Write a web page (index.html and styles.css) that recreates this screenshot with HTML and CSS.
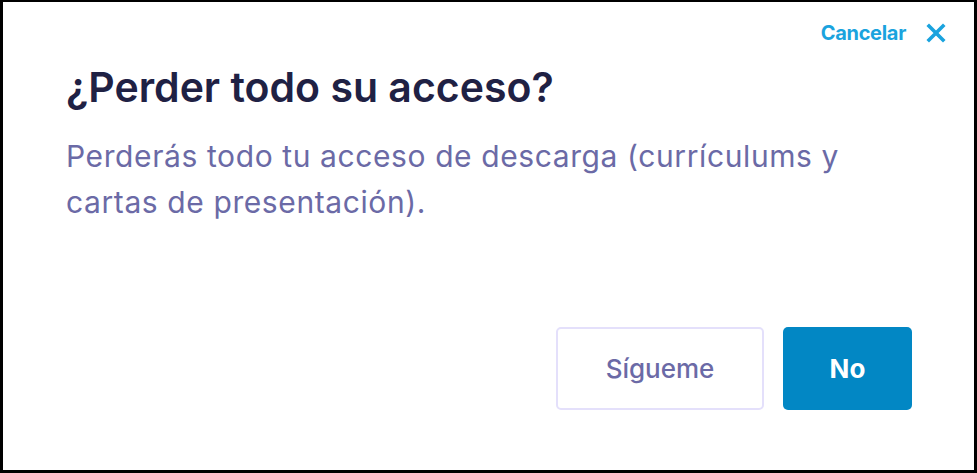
FILE: index.html
```html
<!DOCTYPE html>
<html lang="es">
<head>
<meta charset="utf-8">
<title>¿Perder todo su acceso?</title>
<link rel="stylesheet" href="styles.css">
</head>
<body>
<div class="dialog">
  <div class="topbar">
    <button class="cancel">Cancelar
      <svg class="cancel-icon" width="20" height="20" viewBox="0 0 20 20" aria-hidden="true"><path d="M3 3 L17 17 M17 3 L3 17" stroke="currentColor" stroke-width="3.6" stroke-linecap="square" fill="none"/></svg>
    </button>
  </div>
  <h1 class="title">¿Perder todo su acceso?</h1>
  <p class="message">Perderás todo tu acceso de descarga (currículums y cartas de presentación).</p>
  <div class="actions">
    <button class="btn btn-secondary">Sígueme</button>
    <button class="btn btn-primary">No</button>
  </div>
</div>
</body>
</html>
```
FILE: styles.css
```css
html, body {
  margin: 0;
  padding: 0;
  background: #fff;
}
.dialog {
  box-sizing: border-box;
  width: 977px;
  height: 473px;
  border: 3px solid #000;
  border-top-width: 2px;
  background: #fff;
  display: flex;
  flex-direction: column;
  padding: 18px 28px 60px 63px;
  font-family: Inter, "Noto Sans", sans-serif;
}
.topbar {
  display: flex;
  justify-content: flex-end;
}
.cancel {
  display: flex;
  align-items: center;
  gap: 20px;
  border: 0;
  background: none;
  padding: 0;
  font-family: inherit;
  font-size: 20px;
  font-weight: 700;
  letter-spacing: -0.3px;
  color: #1aa3de;
  line-height: 26px;
}
.cancel-icon {
  display: block;
}
.title {
  margin: 17px 0 0;
  font-size: 41px;
  font-weight: 600;
  line-height: 48px;
  color: #1f2144;
  letter-spacing: 0;
}
.message {
  margin: 22px 0 0;
  width: 800px;
  font-size: 30px;
  font-weight: 400;
  line-height: 46px;
  letter-spacing: 0.6px;
  color: #6b6aa6;
}
.actions {
  margin-top: auto;
  margin-right: 34px;
  display: flex;
  justify-content: flex-end;
  gap: 19px;
}
.btn {
  height: 83px;
  border-radius: 5px;
  font-family: inherit;
  font-size: 26px;
  cursor: pointer;
}
.btn-secondary {
  width: 208px;
  background: #fff;
  border: 2px solid #e4e0fb;
  color: #6b6aa6;
  font-weight: 500;
}
.btn-primary {
  width: 129px;
  background: #0287c4;
  border: 0;
  color: #fff;
  font-weight: 700;
}
```
